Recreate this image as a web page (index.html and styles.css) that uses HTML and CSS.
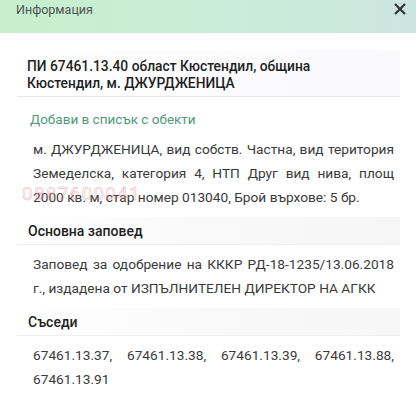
FILE: index.html
```html
<!DOCTYPE html>
<html lang="bg">
<head>
<meta charset="utf-8">
<link rel="stylesheet" href="styles.css">
</head>
<body>
<div class="header">
  <span class="header-title">Информация</span>
  <svg class="close" width="12" height="12" viewBox="0 0 12 12"><path d="M1 1 L11 11 M11 1 L1 11" stroke="#2f3a36" stroke-width="2.3"/></svg>
</div>
<div class="content">
  <div class="title-block">ПИ 67461.13.40 област Кюстендил, община Кюстендил, м. ДЖУРДЖЕНИЦА</div>
  <div class="add-link">Добави в списък с обекти</div>
  <div class="para first-para">м. ДЖУРДЖЕНИЦА, вид собств. Частна, вид територия Земеделска, категория 4, НТП Друг вид нива, площ 2000 кв. м, стар номер 013040, Брой върхове: 5 бр.<span class="watermark">0887600041</span></div>
  <div class="section-head">Основна заповед</div>
  <div class="para">Заповед за одобрение на КККР РД-18-1235/13.06.2018 г., издадена от ИЗПЪЛНИТЕЛЕН ДИРЕКТОР НА АГКК</div>
  <div class="section-head">Съседи</div>
  <div class="para">67461.13.37, 67461.13.38, 67461.13.39, 67461.13.88, 67461.13.91</div>
</div>
</body>
</html>
```
FILE: styles.css
```css
html, body {
  margin: 0;
  padding: 0;
  background: #fff;
  font-family: Roboto, "Noto Sans", sans-serif;
  color: #333;
  width: 416px;
  overflow: hidden;
}
.header {
  height: 33px;
  box-sizing: border-box;
  background: linear-gradient(90deg, #c7efcd 0%, #c9eed6 45%, #cbe9dc 75%, #cde5e0 100%);
  display: flex;
  align-items: flex-start;
  justify-content: space-between;
  padding: 2px 10px 0 16px;
}
.header-title {
  font-size: 12.5px;
  line-height: 15px;
  color: #505552;
}
.close {
  margin-top: 1px;
}
.content {
  padding: 17px 16px 0 17px;
}
.title-block {
  background: linear-gradient(90deg, #ffffff 0%, #fbfafc 60%, #f9f8fa 100%);
  padding: 8px 24px 4px 10px;
  font-size: 13.8px;
  font-weight: 500;
  line-height: 17px;
  color: #1f1f1f;
  border-bottom: 1px solid #e8e8ea;
}
.add-link {
  color: #4f9a78;
  font-size: 13.5px;
  padding: 12px 0 0 13px;
  line-height: 20px;
}
.para {
  padding: 7px 6px 0 16px;
  font-size: 13.7px;
  line-height: 24px;
  text-align: justify;
  color: #3a3a3a;
}
.first-para {
  position: relative;
  padding-top: 8px;
}
.watermark {
  position: absolute;
  left: 5px;
  top: 54px;
  font-size: 19px;
  line-height: 22px;
  letter-spacing: 1.2px;
  color: transparent;
  -webkit-text-stroke: 0.6px rgba(214, 140, 150, 0.6);
  pointer-events: none;
}
.section-head {
  margin-top: 8px;
  background: linear-gradient(90deg, #ffffff 0%, #f9f9fa 50%, #f6f6f7 100%);
  padding: 6px 10px 4px 11px;
  font-size: 14px;
  font-weight: 500;
  line-height: 17px;
  color: #1f1f1f;
  border-bottom: 1px solid #efeff0;
}
```
